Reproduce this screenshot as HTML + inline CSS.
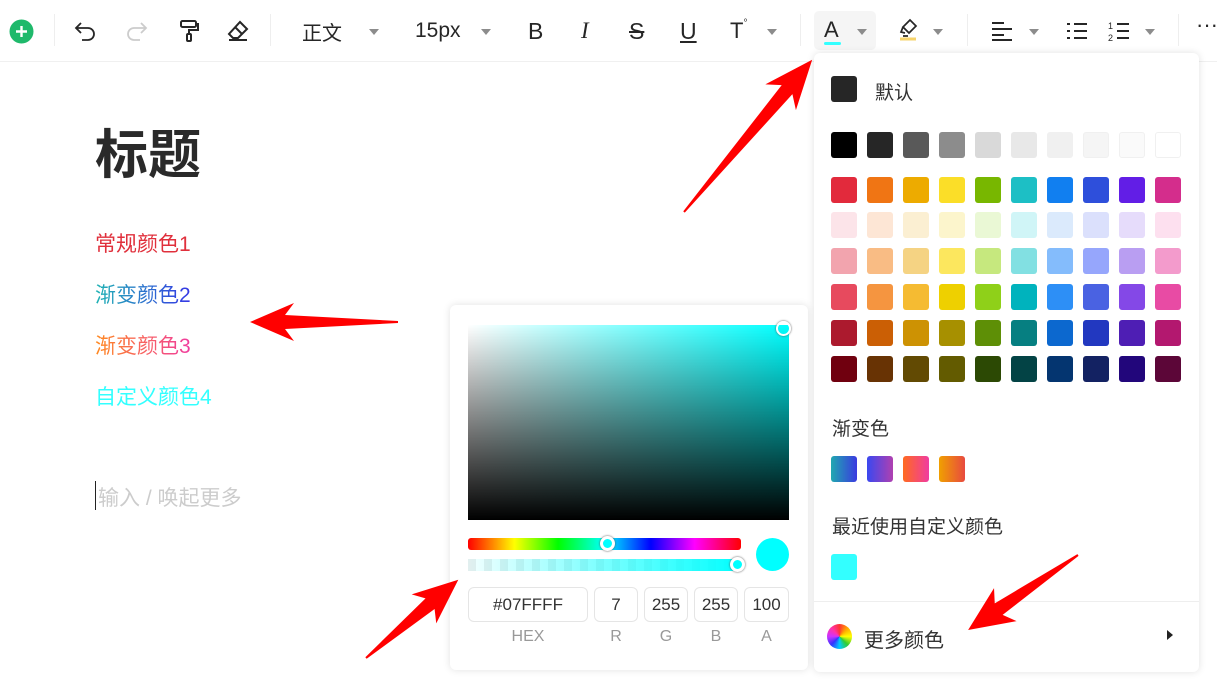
<!DOCTYPE html>
<html><head><meta charset="utf-8"><style>
*{margin:0;padding:0;box-sizing:border-box}
body{width:1217px;height:691px;overflow:hidden;background:#fff;font-family:"Liberation Sans","Noto Sans CJK SC",sans-serif;position:relative;color:#262626}
.a{position:absolute}
.car{position:absolute;width:0;height:0;border-left:5px solid transparent;border-right:5px solid transparent;border-top:6px solid #8c8c8c}
.div{position:absolute;top:14px;width:1px;height:32px;background:#eee}
.sw{position:absolute;width:26px;height:26px;border-radius:3px}
.inp{position:absolute;top:587px;height:35px;border:1px solid #e5e5e5;border-radius:6px;font-size:17px;color:#333;text-align:center;line-height:33px}
.lab{position:absolute;top:628px;font-size:16px;color:#999;text-align:center}
</style></head><body>
<div class="a" style="left:0;top:61px;width:1217px;height:1px;background:#f0f0f0"></div>
<!-- toolbar -->
<svg class="a" style="left:9px;top:19px" width="25" height="25"><circle cx="12.5" cy="12.5" r="12" fill="#1fb96b"/><path d="M12.5 7v11M7 12.5h11" stroke="#fff" stroke-width="2.4"/></svg>
<div class="div" style="left:54px"></div>
<svg class="a" style="left:74px;top:20px" width="24" height="22" fill="none" stroke="#262626" stroke-width="1.8"><path d="M7 3L2 8l5 5M2 8h12a6 6 0 010 12H8"/></svg>
<svg class="a" style="left:124px;top:20px" width="24" height="22" fill="none" stroke="#ccc" stroke-width="1.8"><path d="M17 3l5 5-5 5M22 8H10a6 6 0 000 12h6"/></svg>
<svg class="a" style="left:178px;top:19px" width="22" height="24" fill="none" stroke="#262626" stroke-width="2"><rect x="3" y="2" width="15" height="6" rx="1.5"/><path d="M18 5h2v6h-9v4"/><rect x="9" y="15" width="4" height="7" rx="1"/></svg>
<svg class="a" style="left:226px;top:19px" width="24" height="24" fill="none" stroke="#262626" stroke-width="2"><path d="M14 3l7 7-9 9H7l-4-4z M9 8l7 7 M3 21h18"/></svg>
<div class="div" style="left:270px"></div>
<div class="a" style="left:302px;top:17px;font-size:20px">正文</div><div class="car" style="left:369px;top:29px"></div>
<div class="a" style="left:415px;top:19px;font-size:21px">15px</div><div class="car" style="left:481px;top:29px"></div>
<div class="a" style="left:528px;top:18px;font-size:23px">B</div>
<div class="a" style="left:581px;top:18px;font-size:23px;font-style:italic;font-family:'Liberation Serif',serif">I</div>
<div class="a" style="left:629px;top:18px;font-size:23px;text-decoration:line-through">S</div>
<div class="a" style="left:680px;top:18px;font-size:23px;text-decoration:underline">U</div>
<div class="a" style="left:730px;top:18px;font-size:22px">T<span style="font-size:10px;vertical-align:top">°</span></div><div class="car" style="left:767px;top:29px"></div>
<div class="div" style="left:800px"></div>
<div class="a" style="left:814px;top:11px;width:62px;height:39px;background:#f5f5f5;border-radius:5px"></div>
<div class="a" style="left:824px;top:17px;font-size:22px">A</div>
<div class="a" style="left:824px;top:42px;width:17px;height:3px;background:#3ff;border-radius:2px"></div>
<div class="car" style="left:857px;top:29px"></div>
<svg class="a" style="left:898px;top:17px" width="22" height="24" fill="none" stroke="#262626" stroke-width="1.7"><path d="M12 3l6 6-7 7-6-6z M5 10l-2 5 4 1 M5 19h5"/><path d="M2 22h16" stroke="#f6d36b" stroke-width="3"/></svg>
<div class="car" style="left:933px;top:29px"></div>
<div class="div" style="left:967px"></div>
<svg class="a" style="left:991px;top:21px" width="22" height="20" stroke="#262626" stroke-width="2"><path d="M1 2h12M1 8h20M1 14h12M1 19h20"/></svg><div class="car" style="left:1029px;top:29px"></div>
<svg class="a" style="left:1066px;top:21px" width="22" height="20" stroke="#262626" stroke-width="2"><path d="M1 3h3M8 3h13M1 10h3M8 10h13M1 17h3M8 17h13"/></svg>
<svg class="a" style="left:1108px;top:20px" width="22" height="22" stroke="#262626" stroke-width="2"><path d="M9 4h12M9 11h12M9 18h12"/><text x="0" y="9" font-size="9" fill="#262626" stroke="none">1</text><text x="0" y="21" font-size="9" fill="#262626" stroke="none">2</text></svg>
<div class="car" style="left:1145px;top:29px"></div>
<div class="div" style="left:1178px"></div>
<div class="a" style="left:1196px;top:12px;font-size:22px">···</div>
<!-- content -->
<div class="a" style="left:95px;top:113px;font-size:53px;font-weight:bold;color:#2a2a2a">标题</div>
<div class="a" style="left:95px;top:228px;font-size:21px;color:#e0303c">常规颜色1</div>
<div class="a" style="left:95px;top:279px;font-size:21px;background:linear-gradient(90deg,#20b4b4,#3636e6);-webkit-background-clip:text;color:transparent">渐变颜色2</div>
<div class="a" style="left:95px;top:330px;font-size:21px;background:linear-gradient(90deg,#ff8a20,#f03ca0);-webkit-background-clip:text;color:transparent">渐变颜色3</div>
<div class="a" style="left:95px;top:381px;font-size:21px;color:#3ff">自定义颜色4</div>
<div class="a" style="left:95px;top:481px;width:1px;height:29px;background:#222"></div>
<div class="a" style="left:98px;top:482px;font-size:21px;color:#ccc">输入 / 唤起更多</div>
<!-- picker -->
<div class="a" style="left:450px;top:305px;width:358px;height:365px;border-radius:6px;box-shadow:0 0 8px rgba(0,0,0,.12);background:#fff"></div>
<div class="a" style="left:468px;top:325px;width:321px;height:195px;background:linear-gradient(to top,#000,transparent),linear-gradient(to right,#fff,#0ff)"></div>
<div class="a" style="left:776px;top:321px;width:15px;height:15px;border:2px solid #fff;border-radius:50%;box-shadow:0 0 2px #555"></div>
<div class="a" style="left:468px;top:538px;width:273px;height:12px;border-radius:3px;background:linear-gradient(90deg,red,#ff0 17%,#0f0 33%,#0ff 50%,#00f 67%,#f0f 83%,red)"></div>
<div class="a" style="left:600px;top:536px;width:15px;height:15px;border-radius:50%;background:#0ff;border:3px solid #fff;box-shadow:0 0 2px #555"></div>
<div class="a" style="left:468px;top:559px;width:273px;height:12px;background:linear-gradient(90deg,rgba(0,255,255,.05),#0ff),repeating-linear-gradient(90deg,#eee 0 8px,#fff 8px 16px)"></div>
<div class="a" style="left:730px;top:557px;width:15px;height:15px;border-radius:50%;background:#0ff;border:3px solid #fff;box-shadow:0 0 2px #555"></div>
<div class="a" style="left:756px;top:538px;width:33px;height:33px;border-radius:50%;background:#0ff"></div>
<div class="inp" style="left:468px;width:120px">#07FFFF</div>
<div class="inp" style="left:594px;width:44px">7</div>
<div class="inp" style="left:644px;width:44px">255</div>
<div class="inp" style="left:694px;width:44px">255</div>
<div class="inp" style="left:744px;width:45px">100</div>
<div class="lab" style="left:468px;width:120px">HEX</div><div class="lab" style="left:594px;width:44px">R</div><div class="lab" style="left:644px;width:44px">G</div><div class="lab" style="left:694px;width:44px">B</div><div class="lab" style="left:744px;width:45px">A</div>
<!-- color menu -->
<div class="a" style="left:814px;top:53px;width:385px;height:619px;border-radius:6px;box-shadow:0 0 8px rgba(0,0,0,.12);background:#fff"></div>
<div class="sw" style="left:831px;top:76px;background:#262626"></div>
<div class="a" style="left:875px;top:78px;font-size:19px;color:#333">默认</div>
<div id="g"></div>
<div class="a" style="left:832px;top:414px;font-size:19px;color:#333">渐变色</div>
<div class="sw" style="left:831px;top:456px;background:linear-gradient(90deg,#20a8b0,#3a3ae0)"></div>
<div class="sw" style="left:867px;top:456px;background:linear-gradient(90deg,#3a48f0,#b040b0)"></div>
<div class="sw" style="left:903px;top:456px;background:linear-gradient(90deg,#ff6a20,#f03ca0)"></div>
<div class="sw" style="left:939px;top:456px;background:linear-gradient(90deg,#f0a000,#e84a40)"></div>
<div class="a" style="left:832px;top:512px;font-size:19px;color:#333">最近使用自定义颜色</div>
<div class="sw" style="left:831px;top:554px;background:#3ff"></div>
<div class="a" style="left:814px;top:601px;width:385px;height:1px;background:#eee"></div>
<div class="a" style="left:827px;top:624px;width:25px;height:25px;border-radius:50%;background:conic-gradient(#f33,#fa0,#ff0,#3c3,#0cf,#33f,#c3f,#f3a,#f33)"></div>
<div class="a" style="left:864px;top:624px;font-size:20px;color:#333">更多颜色</div>
<div class="a" style="left:1167px;top:630px;width:0;height:0;border-top:5px solid transparent;border-bottom:5px solid transparent;border-left:6px solid #222"></div>
<script>
var rows=[["#000","#262626","#595959","#8c8c8c","#d9d9d9","#e8e8e8","#f0f0f0","#f5f5f5","#fafafa","#fff"],
["#e22a3c","#f07514","#edab00","#fbde28","#78b700","#1dbfc5","#117ff0","#2e4fdb","#621ee6","#d42d8c"],
["#fce4e9","#fde6d5","#fbefd2","#fcf5cc","#eaf8d5","#d0f5f7","#dbeafc","#dbe0fc","#e6dcfb","#fde0ef"],
["#f2a4ae","#f9bc84","#f5d383","#fce75e","#c6e87e","#82e0e2","#84bcfc","#96a6fc","#b99ef2","#f39bcc"],
["#e74a5e","#f59540","#f5bb32","#eed000","#8fd019","#00b3bd","#2d8ff6","#4a62e2","#8448e7","#e84ba4"],
["#ac1a2e","#cb5f05","#cd9203","#a79000","#5e8f06","#067f81","#0c68cf","#2238c0","#4e1eb4","#b3186f"],
["#70000f","#683304","#624a03","#635b00","#2c4904","#034345","#043570","#132262","#22067b","#5c0638"]];
var ys=[132,177,212,248,284,320,356],h="";
rows.forEach(function(r,i){r.forEach(function(c,j){h+='<div class="sw" style="left:'+(831+36*j)+'px;top:'+ys[i]+'px;background:'+c+(i==0&&j>5?';border:1px solid #f0f0f0':'')+'"></div>'})});
document.getElementById('g').innerHTML=h;
</script>
<!-- arrows -->
<svg class="a" style="left:0;top:0" width="1217" height="691">
<g fill="#f00">
<polygon transform="translate(684,212) rotate(-49.9)" points="0,-1 160,-7 150,-20 199,0 150,20 160,7 0,1"/>
<polygon transform="translate(398,322) rotate(180)" points="0,-1 113,-7 104,-19 148,0 104,19 113,7 0,1"/>
<polygon transform="translate(366,658) rotate(-40.3)" points="0,-1 84,-7 76,-19 121,0 76,19 84,7 0,1"/>
<polygon transform="translate(1078,555) rotate(145.7)" points="0,-1 96,-7 88,-20 133,0 88,20 96,7 0,1"/>
</g></svg>
</body></html>
